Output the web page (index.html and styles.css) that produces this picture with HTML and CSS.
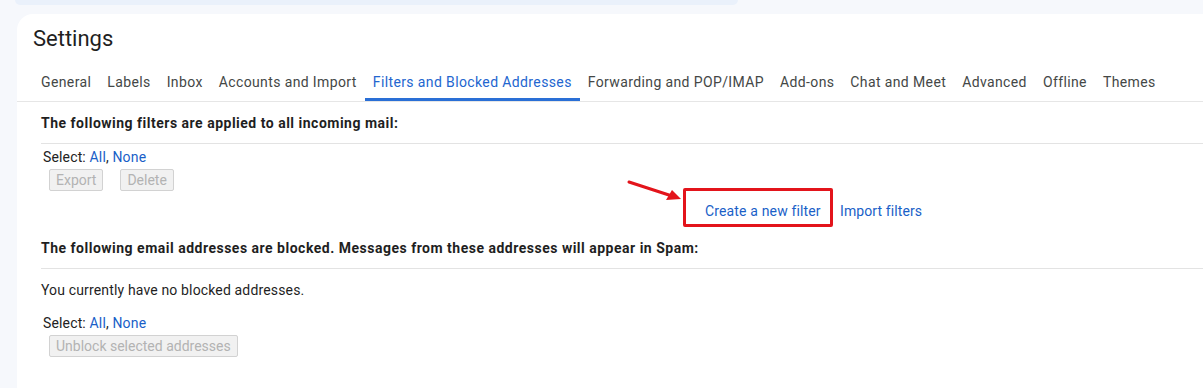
FILE: index.html
```html
<!DOCTYPE html>
<html>
<head>
<meta charset="utf-8">
<link rel="stylesheet" href="styles.css">
</head>
<body>
<div class="topbar"></div>
<main class="card">
  <h1 class="title">Settings</h1>
  <nav class="tabs">
    <span class="tab">General</span>
    <span class="tab">Labels</span>
    <span class="tab">Inbox</span>
    <span class="tab">Accounts and Import</span>
    <span class="tab active">Filters and Blocked Addresses</span>
    <span class="tab">Forwarding and POP/IMAP</span>
    <span class="tab">Add-ons</span>
    <span class="tab">Chat and Meet</span>
    <span class="tab">Advanced</span>
    <span class="tab">Offline</span>
    <span class="tab">Themes</span>
  </nav>
  <section class="content">
    <div class="heading">The following filters are applied to all incoming mail:</div>
    <div class="select">Select: <a class="link">All</a>, <a class="link">None</a></div>
    <div class="btnrow">
      <span class="btn">Export</span>
      <span class="btn">Delete</span>
    </div>
    <div class="actions">
      <div class="highlight">
        <svg class="arrow" width="60" height="24" viewBox="0 0 60 24">
          <line x1="3" y1="4" x2="46" y2="18" stroke="#e3141b" stroke-width="3" stroke-linecap="round"/>
          <polygon points="55,21 40,22 46,12" fill="#e3141b"/>
        </svg>
        <a class="link create">Create a new filter</a>
      </div>
      <a class="link import">Import filters</a>
    </div>
    <div class="heading heading2">The following email addresses are blocked. Messages from these addresses will appear in Spam:</div>
    <div class="plain">You currently have no blocked addresses.</div>
    <div class="select select2">Select: <a class="link">All</a>, <a class="link">None</a></div>
    <div class="btnrow">
      <span class="btn">Unblock selected addresses</span>
    </div>
  </section>
</main>
</body>
</html>
```
FILE: styles.css
```css
html, body {
  margin: 0;
  padding: 0;
}
body {
  background: #f6f8fc;
  width: 1203px;
  height: 388px;
  overflow: hidden;
  font-family: Roboto, "Liberation Sans", sans-serif;
  color: #1f1f1f;
}
.topbar {
  margin-left: 15px;
  width: 723px;
  height: 5px;
  background: #eaf1fb;
  border-radius: 0 0 8px 8px;
}
.card {
  margin: 9px 0 0 17px;
  background: #fff;
  border-radius: 16px 0 0 0;
  height: 374px;
  overflow: hidden;
}
.title {
  margin: 0;
  padding: 11px 0 0 16px;
  font-size: 22px;
  font-weight: 400;
  line-height: 28px;
  color: #1f1f1f;
}
.tabs {
  display: flex;
  margin-top: 10px;
  padding-left: 16px;
  border-bottom: 1px solid #e6e6e6;
  height: 39px;
  box-sizing: border-box;
}
.tab {
  padding: 2px 8px 0;
  font-size: 14px;
  line-height: 34px;
  color: #444746;
  white-space: nowrap;
  border-bottom: 3px solid transparent;
  height: 33px;
  letter-spacing: 0.38px;
}
.tab.active {
  color: #2366cf;
  border-bottom-color: #2a6fd6;
}
.content {
  padding-left: 24px;
  font-size: 14px;
}
.heading {
  font-weight: 700;
  line-height: 20px;
  padding: 11px 0 10px;
  border-bottom: 1px solid #e3e3e3;
  color: #1f1f1f;
  letter-spacing: 0.5px;
}
.select {
  padding: 4px 0 0 2px;
  line-height: 18px;
  font-size: 14px;
  color: #222;
  letter-spacing: 0.15px;
}
.link {
  color: #1a5fc8;
  text-decoration: none;
}
.btnrow {
  display: flex;
  gap: 17px;
  padding: 3px 0 0 8px;
}
.btn {
  display: inline-block;
  height: 20px;
  line-height: 20px;
  padding: 0 6px;
  font-size: 14px;
  color: #b3b3b3;
  background: #f1f1f1;
  border: 1px solid #d2d2d2;
  border-radius: 2px;
}
.actions {
  display: flex;
  align-items: center;
  padding-left: 642px;
  margin-top: -3px;
}
.highlight {
  position: relative;
  width: 144px;
  height: 33px;
  border: 3px solid #e3141b;
  border-radius: 2px;
  display: flex;
  align-items: center;
}
.arrow {
  position: absolute;
  left: -60px;
  top: -13px;
}
.create {
  margin-left: 19px;
  margin-top: 6px;
  font-size: 14px;
  letter-spacing: 0.15px;
}
.import {
  margin-left: 7px;
  margin-top: 6px;
  letter-spacing: 0.1px;
}
.heading2 {
  padding-top: 11px;
}
.plain {
  padding-top: 11px;
  line-height: 20px;
  letter-spacing: 0.15px;
}
.select2 {
  padding-top: 14px;
}
```
